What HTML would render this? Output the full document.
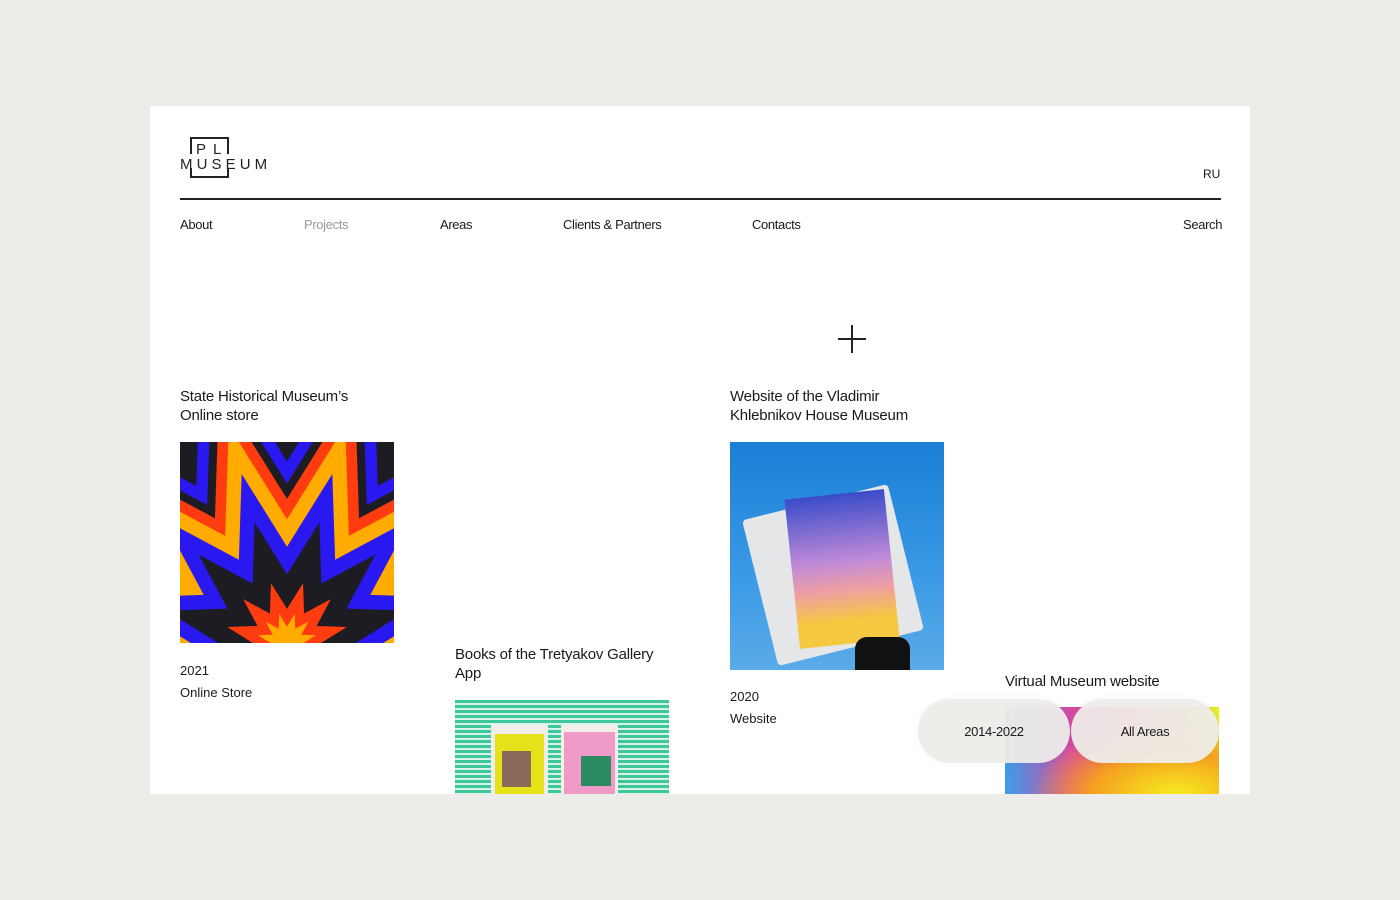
<!DOCTYPE html>
<html><head><meta charset="utf-8"><style>
*{margin:0;padding:0;box-sizing:border-box}
body{width:1400px;height:900px;background:#ecede9;font-family:"Liberation Sans",Arial,sans-serif;color:#1a1a1a;position:relative;overflow:hidden}
.card{position:absolute;left:150px;top:106px;width:1100px;height:688px;background:#fff;overflow:hidden}
.a{position:absolute}
.nav{font-size:13px;top:111px;letter-spacing:-0.35px}
.t{font-size:15px;line-height:19px;color:#1a1a1a;letter-spacing:-0.2px}
.s{font-size:13px;color:#1a1a1a}
.pill{position:absolute;height:64px;border-radius:32px;background:rgba(238,236,233,0.95);font-size:13px;display:flex;align-items:center;justify-content:center;box-shadow:0 0 10px rgba(0,0,0,0.04);letter-spacing:-0.3px}
</style></head><body>
<div class="card">
  <div class="a" style="left:40px;top:31px;width:39px;height:41px;border:2px solid #222;"></div>
  <div class="a" style="left:38px;top:48px;width:43px;height:14px;background:#fff"></div>
  <div class="a" style="left:46px;top:35px;font-size:15px;letter-spacing:7px;color:#222">PL</div>
  <div class="a" style="left:30px;top:50px;font-size:15px;letter-spacing:4.1px;color:#222">MUSEUM</div>
  <div class="a" style="left:1053px;top:61px;font-size:12px">RU</div>
  <div class="a" style="left:30px;top:92px;width:1041px;height:2px;background:#222"></div>
  <div class="a nav" style="left:30px">About</div>
  <div class="a nav" style="left:154px;color:#999">Projects</div>
  <div class="a nav" style="left:290px">Areas</div>
  <div class="a nav" style="left:413px">Clients &amp; Partners</div>
  <div class="a nav" style="left:602px">Contacts</div>
  <div class="a nav" style="left:1033px">Search</div>
  <div class="a" style="left:688px;top:232px;width:28px;height:2px;background:#222"></div>
  <div class="a" style="left:701px;top:219px;width:2px;height:28px;background:#222"></div>

  <div class="a t" style="left:30px;top:281px">State Historical Museum’s<br>Online store</div>
  <svg class="a" style="left:30px;top:336px" width="214" height="201" viewBox="0 0 214 201">
    <rect width="214" height="201" fill="#1c1c22"/>
    <g transform="translate(107,201)">
      <polygon transform="scale(330)" fill="#2a18f0" points=".55,0 .966,-.259 .476,-.275 .707,-.707 .275,-.476 .259,-.966 0,-.55 -.259,-.966 -.275,-.476 -.707,-.707 -.476,-.275 -.966,-.259 -.55,0 -.55,.3 .55,.3"/>
      <polygon transform="scale(290)" fill="#1c1c22" points=".55,0 .966,-.259 .476,-.275 .707,-.707 .275,-.476 .259,-.966 0,-.55 -.259,-.966 -.275,-.476 -.707,-.707 -.476,-.275 -.966,-.259 -.55,0 -.55,.3 .55,.3"/>
      <polygon transform="scale(262)" fill="#ff3b10" points=".55,0 .966,-.259 .476,-.275 .707,-.707 .275,-.476 .259,-.966 0,-.55 -.259,-.966 -.275,-.476 -.707,-.707 -.476,-.275 -.966,-.259 -.55,0 -.55,.3 .55,.3"/>
      <polygon transform="scale(225)" fill="#ffab00" points=".55,0 .966,-.259 .476,-.275 .707,-.707 .275,-.476 .259,-.966 0,-.55 -.259,-.966 -.275,-.476 -.707,-.707 -.476,-.275 -.966,-.259 -.55,0 -.55,.3 .55,.3"/>
      <polygon transform="scale(175)" fill="#2a18f0" points=".55,0 .966,-.259 .476,-.275 .707,-.707 .275,-.476 .259,-.966 0,-.55 -.259,-.966 -.275,-.476 -.707,-.707 -.476,-.275 -.966,-.259 -.55,0 -.55,.3 .55,.3"/>
      <polygon transform="scale(125)" fill="#1c1c22" points=".55,0 .966,-.259 .476,-.275 .707,-.707 .275,-.476 .259,-.966 0,-.55 -.259,-.966 -.275,-.476 -.707,-.707 -.476,-.275 -.966,-.259 -.55,0 -.55,.3 .55,.3"/>
      <polygon transform="scale(62)" fill="#ff3b10" points=".55,0 .966,-.259 .476,-.275 .707,-.707 .275,-.476 .259,-.966 0,-.55 -.259,-.966 -.275,-.476 -.707,-.707 -.476,-.275 -.966,-.259 -.55,0 -.55,.3 .55,.3"/>
      <polygon transform="scale(30)" fill="#ffab00" points=".55,0 .966,-.259 .476,-.275 .707,-.707 .275,-.476 .259,-.966 0,-.55 -.259,-.966 -.275,-.476 -.707,-.707 -.476,-.275 -.966,-.259 -.55,0 -.55,.3 .55,.3"/>
    </g>
  </svg>
  <div class="a s" style="left:30px;top:557px">2021</div>
  <div class="a s" style="left:30px;top:579px">Online Store</div>

  <div class="a t" style="left:305px;top:539px">Books of the Tretyakov Gallery<br>App</div>
  <div class="a" style="left:305px;top:594px;width:214px;height:100px;background:repeating-linear-gradient(180deg,#3ec79a 0 3px,#d8f3e8 3px 5px)"></div>
  <div class="a" style="left:341px;top:619px;width:57px;height:75px;background:#f1efe8"></div>
  <div class="a" style="left:345px;top:628px;width:49px;height:66px;background:#e6e21a"></div>
  <div class="a" style="left:352px;top:645px;width:29px;height:36px;background:#8a6a58"></div>
  <div class="a" style="left:411px;top:619px;width:57px;height:75px;background:#f1efe8"></div>
  <div class="a" style="left:414px;top:626px;width:51px;height:68px;background:#f09ac8"></div>
  <div class="a" style="left:431px;top:650px;width:30px;height:30px;background:#2a8a60"></div>

  <div class="a t" style="left:580px;top:281px">Website of the Vladimir<br>Khlebnikov House Museum</div>
  <div class="a" style="left:580px;top:336px;width:214px;height:228px;background:linear-gradient(180deg,#1a7fd6,#3c9ae6 60%,#5aabe8);overflow:hidden">
    <div class="a" style="left:28px;top:58px;width:150px;height:150px;background:#e4e6e8;transform:rotate(-14deg);border-radius:4px"></div>
    <div class="a" style="left:62px;top:52px;width:100px;height:150px;background:linear-gradient(180deg,#3a4cc9,#c08ad8 45%,#f0a0a0 65%,#f5c840 85%);transform:rotate(-6deg)"></div>
    <div class="a" style="left:125px;top:195px;width:55px;height:40px;background:#111;border-radius:12px 12px 0 0"></div>
  </div>
  <div class="a s" style="left:580px;top:583px">2020</div>
  <div class="a s" style="left:580px;top:605px">Website</div>

  <div class="a t" style="left:855px;top:566px">Virtual Museum website</div>
  <div class="a" style="left:855px;top:601px;width:214px;height:90px;background:radial-gradient(ellipse at 80% 100%,#f6f020 0%,#f5a020 35%,transparent 60%),linear-gradient(90deg,#3a9ee8 0%,#d24aa8 30%,#f03a70 55%,#e8f020 100%)"></div>
  <div class="pill" style="left:768px;top:593px;width:152px">2014-2022</div>
  <div class="pill" style="left:921px;top:593px;width:148px">All Areas</div>
</div>
</body></html>
